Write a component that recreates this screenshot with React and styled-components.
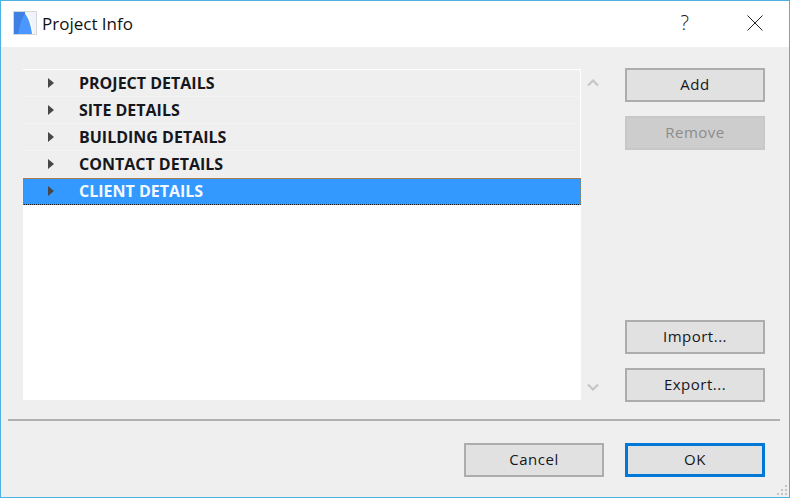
import React from "react";
import styled, { createGlobalStyle } from "styled-components";

const GlobalStyle = createGlobalStyle`
  html, body {
    margin: 0;
    padding: 0;
    background: #efefef;
  }
`;

const rows = [
  "PROJECT DETAILS",
  "SITE DETAILS",
  "BUILDING DETAILS",
  "CONTACT DETAILS",
  "CLIENT DETAILS",
];

const Dialog = styled.div`
  position: relative;
  box-sizing: border-box;
  width: 790px;
  height: 498px;
  display: flex;
  flex-direction: column;
  border: 1px solid #4db1e2;
  background: #efefef;
  font-family: "Open Sans", "Noto Sans", sans-serif;
  color: #1a1a1a;
`;

const TitleBar = styled.div`
  box-sizing: border-box;
  height: 46px;
  flex: none;
  display: flex;
  align-items: center;
  background: #fff;
  padding: 0 0 2px 12px;
`;

const Title = styled.div`
  margin-left: 5px;
  font-size: 17px;
  color: #111;
`;

const TitleButtons = styled.div`
  margin-left: auto;
  display: flex;
  align-items: center;
  padding-right: 26px;
  gap: 58px;
`;

const Help = styled.div`
  font-size: 20px;
  font-weight: 300;
  line-height: 24px;
`;

const Main = styled.div`
  flex: none;
  display: flex;
  padding: 21px 24px 0 22px;
`;

const List = styled.div`
  width: 558px;
  height: 331px;
  margin-top: 1px;
  flex: none;
  background: #fff;
  padding-top: 1px;
  box-sizing: border-box;
`;

const Row = styled.div`
  box-sizing: border-box;
  height: 27px;
  display: flex;
  align-items: center;
  padding-left: ${(p) => (p.$selected ? "24px" : "25px")};
  padding-bottom: ${(p) => (p.$selected ? "1px" : "0")};
  margin-right: ${(p) => (p.$selected ? "0" : "1px")};
  background: ${(p) => (p.$selected ? "#3399ff" : "#efefef")};
  border-bottom: 1px ${(p) => (p.$selected ? "dotted #15171c" : "solid #f3f3f3")};
  border-top: ${(p) => (p.$selected ? "1px dotted #a5794a" : "none")};
  border-left: ${(p) => (p.$selected ? "1px dotted #a5794a" : "none")};
  border-right: ${(p) => (p.$selected ? "1px dotted #a5794a" : "none")};
  color: ${(p) => (p.$selected ? "#f4f8ff" : "#15171c")};
  font-size: 16px;
  font-weight: 700;
`;

const RowLabel = styled.span`
  margin-left: 25px;
`;

const ScrollColumn = styled.div`
  width: 24px;
  height: 332px;
  flex: none;
  display: flex;
  flex-direction: column;
  justify-content: space-between;
  align-items: center;
  padding: 11px 0 9px;
  box-sizing: border-box;
`;

const Side = styled.div`
  margin-left: 20px;
  width: 140px;
  height: 334px;
  display: flex;
  flex-direction: column;
  gap: 14px;
`;

const Spacer = styled.div`
  flex: 1;
`;

const Button = styled.div`
  box-sizing: border-box;
  width: 140px;
  height: 34px;
  display: flex;
  align-items: center;
  justify-content: center;
  padding-bottom: 2px;
  font-size: 15px;
  letter-spacing: 0.5px;
  background: ${(p) => (p.$disabled ? "#cdcdcd" : "#e1e1e1")};
  color: ${(p) => (p.$disabled ? "#8c8c8c" : "#15171c")};
  border: ${(p) =>
    p.$primary
      ? "3px solid #0078d7"
      : p.$disabled
        ? "2px solid #c8c8c8"
        : "2px solid #adadad"};
`;

const Divider = styled.div`
  height: 2px;
  margin: 17px 9px 0 7px;
  background: #b0b0b0;
`;

const Footer = styled.div`
  display: flex;
  justify-content: flex-end;
  gap: 21px;
  padding: 22px 24px 0 0;
`;

const Grip = styled.svg`
  position: absolute;
  right: 1px;
  bottom: 1px;
`;

const Logo = () => (
  <svg width="24" height="24" viewBox="0 0 24 24">
    <rect width="24" height="24" fill="#d5d7db" />
    <rect x="1" y="1" width="22" height="22" fill="#f0f3f9" />
    <path d="M1 1h11C13 5 8 14 6 23H1z" fill="#3f80e4" />
    <path d="M5 23C7 14 9 6 12 3c3 3 6 11 7 20z" fill="#4b97ff" />
    <path d="M12 1c3 2 6 10 8 22" stroke="#fff" strokeWidth="1" fill="none" />
  </svg>
);

const Close = () => (
  <svg width="16" height="16" viewBox="0 0 16 16">
    <path d="M.5.5l15 15M15.500.5l-15 15" stroke="#222" strokeWidth="1" fill="none" />
  </svg>
);

const Arrow = () => (
  <svg width="6" height="10" viewBox="0 0 6 10">
    <path d="M0 0l6 5-6 5z" fill="#474747" />
  </svg>
);

const Chevron = ({ down }) => (
  <svg width="12" height="8" viewBox="0 0 12 8">
    <path
      d={down ? "M1 1.500l5 5 5-5" : "M1 6.500l5-5 5 5"}
      stroke="#c6c6c6"
      strokeWidth="2.2"
      fill="none"
    />
  </svg>
);

const App = () => (
  <>
    <GlobalStyle />
    <Dialog>
      <TitleBar>
        <Logo />
        <Title>Project Info</Title>
        <TitleButtons>
          <Help>?</Help>
          <Close />
        </TitleButtons>
      </TitleBar>
      <Main>
        <List>
          {rows.map((r) => (
            <Row key={r} $selected={r === "CLIENT DETAILS"}>
              <Arrow />
              <RowLabel>{r}</RowLabel>
            </Row>
          ))}
        </List>
        <ScrollColumn>
          <Chevron />
          <Chevron down />
        </ScrollColumn>
        <Side>
          <Button>Add</Button>
          <Button $disabled>Remove</Button>
          <Spacer />
          <Button>Import...</Button>
          <Button>Export...</Button>
        </Side>
      </Main>
      <Divider />
      <Footer>
        <Button>Cancel</Button>
        <Button $primary>OK</Button>
      </Footer>
      <Grip width="12" height="12" viewBox="0 0 12 12" fill="#c4c4c4">
        <rect x="9" y="1" width="2" height="2" />
        <rect x="5" y="5" width="2" height="2" />
        <rect x="9" y="5" width="2" height="2" />
        <rect x="1" y="9" width="2" height="2" />
        <rect x="5" y="9" width="2" height="2" />
        <rect x="9" y="9" width="2" height="2" />
      </Grip>
    </Dialog>
  </>
);

export default App;
